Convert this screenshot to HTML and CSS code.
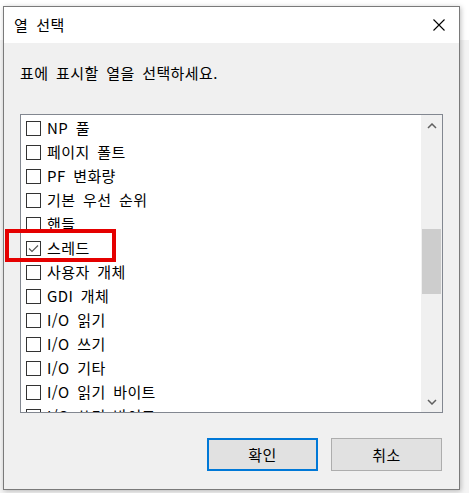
FILE: index.html
```html
<!DOCTYPE html>
<html lang="ko">
<head>
<meta charset="utf-8">
<link rel="stylesheet" href="styles.css">
</head>
<body>
<div class="screen">
  <div class="dialog">
    <div class="titlebar">
      <span class="title">열 선택</span>
      <svg class="close" width="12" height="12" viewBox="0 0 12 12"><path d="M0.5 0.5 L11.5 11.5 M11.5 0.5 L0.5 11.5" stroke="#000" stroke-width="1.1" fill="none"/></svg>
    </div>
    <div class="content">
      <p class="prompt">표에 표시할 열을 선택하세요.</p>
      <div class="listbox">
        <ul class="items">
          <li class="item"><span class="cb"></span><span class="label">NP 풀</span></li>
          <li class="item"><span class="cb"></span><span class="label">페이지 폴트</span></li>
          <li class="item"><span class="cb"></span><span class="label">PF 변화량</span></li>
          <li class="item"><span class="cb"></span><span class="label">기본 우선 순위</span></li>
          <li class="item"><span class="cb"></span><span class="label">핸들</span></li>
          <li class="item"><span class="cb checked"><svg width="13" height="13" viewBox="0 0 13 13"><path d="M2 6.5 L5 9.5 L11 3.5" stroke="#555" stroke-width="1.1" fill="none"/></svg></span><span class="label">스레드</span></li>
          <li class="item"><span class="cb"></span><span class="label">사용자 개체</span></li>
          <li class="item"><span class="cb"></span><span class="label">GDI 개체</span></li>
          <li class="item"><span class="cb"></span><span class="label">I/O 읽기</span></li>
          <li class="item"><span class="cb"></span><span class="label">I/O 쓰기</span></li>
          <li class="item"><span class="cb"></span><span class="label">I/O 기타</span></li>
          <li class="item"><span class="cb"></span><span class="label">I/O 읽기 바이트</span></li>
          <li class="item"><span class="cb"></span><span class="label">I/O 쓰기 바이트</span></li>
        </ul>
        <div class="scrollbar">
          <div class="arrow"><svg width="10" height="6" viewBox="0 0 10 6"><path d="M1 5 L5 1 L9 5" stroke="#606060" stroke-width="1.5" fill="none"/></svg></div>
          <div class="track"><div class="thumb"></div></div>
          <div class="arrow"><svg width="10" height="6" viewBox="0 0 10 6"><path d="M1 1 L5 5 L9 1" stroke="#606060" stroke-width="1.5" fill="none"/></svg></div>
        </div>
      </div>
      <div class="buttons">
        <button class="btn primary">확인</button>
        <button class="btn">취소</button>
      </div>
    </div>
    <div class="highlight"></div>
  </div>
</div>
</body>
</html>
```
FILE: styles.css
```css
html, body {
  margin: 0;
  padding: 0;
}
body {
  background: #f4f4f4;
  font-family: "Noto Sans CJK KR", "Noto Sans", sans-serif;
  width: 469px;
  height: 493px;
  overflow: hidden;
}
.screen {
  padding: 6px 0 0 3px;
  background: linear-gradient(#ffffff 0, #ffffff 40px, #f4f4f4 40px);
  height: 493px;
  box-sizing: border-box;
}
.dialog {
  position: relative;
  width: 457px;
  height: 484px;
  box-sizing: border-box;
  border: 1px solid #7a7a7a;
  background: #f0f0f0;
  box-shadow: 1px 1px 5px rgba(0,0,0,0.25);
  display: flex;
  flex-direction: column;
}
.titlebar {
  height: 36px;
  background: #ffffff;
  display: flex;
  align-items: center;
  justify-content: space-between;
  padding: 0 14px 0 10px;
}
.title {
  font-size: 15px;
  line-height: 20px;
  color: #000;
  letter-spacing: 0.6px;
  word-spacing: 3px;
}
.close {
  display: block;
}
.content {
  flex: 1;
  padding: 0 16px;
  display: flex;
  flex-direction: column;
}
.prompt {
  margin: 20px 0 31px 0;
  font-size: 15px;
  line-height: 20px;
  color: #000;
  letter-spacing: 0.4px;
  word-spacing: 3px;
}
.listbox {
  height: 299px;
  box-sizing: border-box;
  border: 1px solid #828790;
  background: #ffffff;
  display: flex;
  overflow: hidden;
}
.items {
  flex: 1;
  list-style: none;
  margin: 0;
  padding: 1px 0 0 5px;
  overflow: hidden;
}
.item {
  height: 24px;
  display: flex;
  align-items: center;
  gap: 6px;
  font-size: 15px;
  color: #000;
  letter-spacing: 0.4px;
  word-spacing: 3px;
}
.label {
  line-height: 20px;
  white-space: nowrap;
}
.cb {
  width: 15px;
  height: 15px;
  box-sizing: border-box;
  border: 1px solid #333333;
  background: #fff;
  display: flex;
  align-items: center;
  justify-content: center;
  flex: none;
}
.cb svg {
  display: block;
}
.scrollbar {
  width: 21px;
  background: #f0f0f0;
  display: flex;
  flex-direction: column;
}
.arrow {
  height: 21px;
  display: flex;
  align-items: center;
  justify-content: center;
}
.track {
  flex: 1;
}
.thumb {
  margin: 93px 1px 0 1px;
  height: 65px;
  background: #cdcdcd;
}
.buttons {
  margin-top: 25px;
  display: flex;
  justify-content: flex-end;
  gap: 13px;
  margin-right: 1px;
}
.btn {
  width: 111px;
  height: 33px;
  box-sizing: border-box;
  border: 1px solid #adadad;
  background: #e1e1e1;
  font-family: "Noto Sans CJK KR", "Noto Sans", sans-serif;
  font-size: 15px;
  color: #000;
  padding: 0;
  letter-spacing: 0.5px;
}
.btn.primary {
  border: 2px solid #0078d7;
}
.highlight {
  position: absolute;
  left: 1px;
  top: 222px;
  width: 111px;
  height: 33px;
  box-sizing: border-box;
  border: 4px solid #e50000;
}
```
